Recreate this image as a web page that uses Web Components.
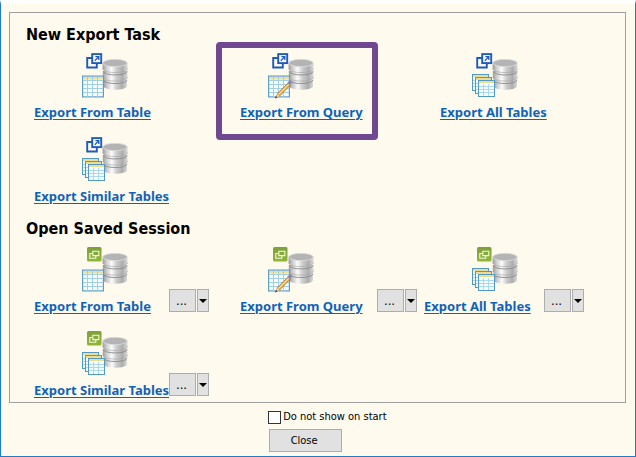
<!DOCTYPE html>
<html lang="en">
<head>
<meta charset="utf-8">
<title>Export</title>
<style>
  html, body {
    margin: 0;
  }
  body {
    font: 11px/16px Tahoma, "DejaVu Sans Condensed", "DejaVu Sans", sans-serif;
    color: #000;
  }
</style>
</head>
<body>
<export-dialog>
  <task-section heading="New Export Task">
    <export-task kind="table">Export From Table</export-task>
    <export-task kind="query" highlighted>Export From Query</export-task>
    <export-task kind="tables" indented>Export All Tables</export-task>
    <export-task kind="tables">Export Similar Tables</export-task>
  </task-section>
  <task-section heading="Open Saved Session">
    <export-task kind="table" saved>Export From Table</export-task>
    <export-task kind="query" saved>Export From Query</export-task>
    <export-task kind="tables" compact saved>Export All Tables</export-task>
    <export-task kind="tables" saved>Export Similar Tables</export-task>
  </task-section>
</export-dialog>

<script>
class ExportDialog extends HTMLElement {
  constructor() {
    super();
    this.attachShadow({ mode: 'open' });

    this.shadowRoot.innerHTML = /* html */ `
    <style>
        :host {
            display: flex;
            flex-direction: column;
            box-sizing: border-box;
            min-height: 100vh;
            padding: 8px 9px 4px 8px;
            border: 1px solid #1f7cc8;
            border-top: 4px solid #fff;
            background-color: #fffaee;
        }
        main {
            border: 1px solid #a0a0a0;
            padding: 12px 16px 3px;
        }
        footer {
            display: flex;
            flex-direction: column;
            align-items: flex-start;
            gap: 4px;
            padding: 6px 0 0 42%;
        }
        label {
            display: flex;
            align-items: center;
            gap: 2px;
            height: 16px;
        }
        input {
            appearance: none;
            box-sizing: border-box;
            width: 13px;
            height: 13px;
            margin: 0;
            border: 1px solid #333;
            background-color: #fff;
        }
        input:checked {
            box-shadow: inset 0 0 0 2px #fff;
            background-color: #333;
        }
        button {
            width: 73px;
            height: 23px;
            margin-left: 1px;
            padding: 0 3px 0 0;
            border: 1px solid #adadad;
            background-color: #e1e1e1;
            font: inherit;
            color: inherit;
        }
    </style>
    <main><slot></slot></main>
    <footer>
        <label><input type="checkbox">Do not show on start</label>
        <button type="button">Close</button>
    </footer>
        `;
  }
}

class TaskSection extends HTMLElement {
  constructor() {
    super();
    this.attachShadow({ mode: 'open' });

    this.shadowRoot.innerHTML = /* html */ `
    <style>
        :host {
            display: block;
        }
        :host(:not(:first-child)) {
            margin-top: 14px;
        }
        h2 {
            margin: 0 0 8px;
            font-size: 16px;
            line-height: 20px;
        }
        div {
            display: grid;
            grid-template-columns: 186px 204px 1fr;
            row-gap: 16px;
            padding-left: 8px;
        }
    </style>
    <h2></h2>
    <div><slot></slot></div>
        `;
  }

  static get observedAttributes() {
    return ['heading'];
  }

  attributeChangedCallback(name, oldValue, newValue) {
    this.shadowRoot.querySelector('h2').textContent = newValue;
  }
}

class ExportTask extends HTMLElement {
  constructor() {
    super();
    this.attachShadow({ mode: 'open' });

    this.shadowRoot.innerHTML = /* html */ `
    <style>
        :host {
            --indent: 0px;
            --link-width: 135px;
            position: relative;
            display: grid;
            grid-template-columns: var(--link-width) auto;
            grid-template-rows: 51px 17px;
            justify-content: start;
            padding-left: var(--indent);
        }
        :host([kind="query"]) {
            --indent: 20px;
            --link-width: 137px;
        }
        :host([indented]) {
            --indent: 16px;
        }
        :host([compact]) {
            --link-width: 120px;
        }
        :host([highlighted])::before {
            content: "";
            position: absolute;
            inset: -11px 46px -19px -4px;
            border: 6px solid #6f4890;
            border-radius: 4px;
            pointer-events: none;
        }
        task-icon {
            margin-left: calc(48px - var(--indent));
        }
        a {
            grid-row: 2;
            font-family: Tahoma, "Noto Sans", sans-serif;
            font-size: 13px;
            font-weight: bold;
            color: #0e63b8;
            white-space: nowrap;
            text-underline-offset: 2px;
            text-decoration-thickness: 1px;
        }
        split-button {
            grid-area: 1 / 2 / 3 / 3;
            align-self: end;
            margin-bottom: 3px;
        }
        :host(:not([saved])) split-button {
            display: none;
        }
    </style>
    <task-icon></task-icon>
    <a href="#"><slot></slot></a>
    <split-button></split-button>
        `;
  }

  connectedCallback() {
    const icon = this.shadowRoot.querySelector('task-icon');
    icon.setAttribute('kind', this.getAttribute('kind'));
    icon.toggleAttribute('saved', this.hasAttribute('saved'));
  }
}

class SplitButton extends HTMLElement {
  constructor() {
    super();
    this.attachShadow({ mode: 'open' });

    this.shadowRoot.innerHTML = /* html */ `
    <style>
        :host {
            display: flex;
            gap: 1px;
            height: 23px;
        }
        button {
            display: flex;
            align-items: center;
            justify-content: center;
            box-sizing: border-box;
            width: 27px;
            padding: 0 2px 0 0;
            border: 1px solid #adadad;
            background-color: #e1e1e1;
            font: inherit;
            font-size: 13px;
            color: #000;
        }
        .arrow {
            width: 12px;
            padding: 0;
        }
    </style>
    <button type="button">...</button>
    <button type="button" class="arrow" aria-label="Show sessions">
        <svg width="8" height="4" viewBox="0 0 8 4"><path d="M0 0h8L4 4z"/></svg>
    </button>
        `;
  }
}

const BADGES = {
  create: `
    <path d="M10 5H5.2v9.5h9.6V10" fill="none" stroke="#1c5bc0" stroke-width="1.9"/>
    <rect x="10.2" y="1.1" width="9" height="9" fill="#fffaee" stroke="#1c5bc0" stroke-width="1.9"/>
    <path d="M12.8 7.7l3.8-3.8M13.4 3.6h3.4v3.4" fill="none" stroke="#1c5bc0" stroke-width="1.3"/>`,
  saved: `
    <rect x="5" y="0" width="14.5" height="14.5" rx="1.5" fill="url(#green)"/>
    <path d="M10.5 6.5H7.8v4.8h6V9" fill="none" stroke="#f4f9dc" stroke-width="1.1"/>
    <path d="M10.8 4.2h6v4.4h-6z" fill="none" stroke="#f4f9dc" stroke-width="1.1"/>`
};

const DATABASE = `
    <path d="M21.5 26.6V33c0 5 23.5 5 23.5 0v-6.4z" fill="url(#disk)"/>
    <path d="M21.5 26.8c0 5 23.5 5 23.5 0" fill="none" stroke="#8a8a8a" stroke-width=".9"/>
    <path d="M20.8 18V24c0 5.4 24.7 5.4 24.7 0v-6z" fill="url(#disk)"/>
    <path d="M20.8 24c0 5.4 24.7 5.4 24.7 0" fill="none" stroke="#a2a2a2" stroke-width=".6"/>
    <path d="M21.5 18.2c0 5 23.5 5 23.5 0" fill="none" stroke="#8a8a8a" stroke-width=".9"/>
    <path d="M20.6 9.5V15.5c0 5.4 24.9 5.4 24.9 0v-6z" fill="url(#disk)"/>
    <path d="M20.6 15.5c0 5.4 24.9 5.4 24.9 0" fill="none" stroke="#a2a2a2" stroke-width=".6"/>
    <ellipse cx="33" cy="10" rx="12.2" ry="3.7" fill="#b4b4b4" stroke="#dedede" stroke-width=".8"/>`;

const SHEET = `
    <rect x=".6" y="23.1" width="20.8" height="20.8" fill="#f6fcff" stroke="#5d9fc4" stroke-width="1.2"/>
    <path d="M1.2 24h19.6v2.6H1.2z" fill="#ecdf9f"/>
    <path d="M1 27.5h20M1 31.5h20M1 35.5h20M1 39.5h20M5.5 24v20M10.5 24v20M15.5 24v20" stroke="#a3cfe3" stroke-width="1"/>`;

const PENCIL = `
    <path d="M7.5 45l2-4.5L20 30l2.2 2.2L12 42.8z" fill="#f2b44c" stroke="#8c6232" stroke-width=".6"/>
    <path d="M10.8 41.2L21 31" stroke="#ffdf8d" stroke-width="1"/>
    <path d="M19.4 29.8l2-2c1-.8 2.9 1 2.1 2.2L21.4 32z" fill="#8d83aa"/>
    <path d="M7.5 45l1.8-4 2.4 2.2z" fill="#e9cfa5"/>
    <path d="M7 45.4l1-2.4 1.4 1.4z" fill="#3b3b3b"/>`;

function smallSheet(x, y) {
  return `
    <g transform="translate(${x} ${y})">
        <rect x=".5" y=".5" width="16" height="16" fill="#f4fcff" stroke="#4f9bc4"/>
        <path d="M1 1h15v2H1z" fill="#efdc93"/>
        <path d="M1 6.5h15M1 9.5h15M1 12.5h15M5.5 4v12M10.5 4v12" stroke="#a6d5e8" stroke-width=".9"/>
    </g>`;
}

const DOCUMENTS = {
  table: SHEET,
  query: SHEET + PENCIL,
  tables: smallSheet(0, 21) + smallSheet(3, 24) + smallSheet(6, 27)
};

class TaskIcon extends HTMLElement {
  constructor() {
    super();
    this.attachShadow({ mode: 'open' });
  }

  static get observedAttributes() {
    return ['kind', 'saved'];
  }

  attributeChangedCallback() {
    const badge = this.hasAttribute('saved') ? BADGES.saved : BADGES.create;

    this.shadowRoot.innerHTML = /* html */ `
    <style>
        :host {
            display: block;
            width: 46px;
            height: 46px;
        }
        svg {
            display: block;
            overflow: visible;
        }
    </style>
    <svg width="46" height="46" viewBox="0 0 46 46" aria-hidden="true">
        <defs>
            <linearGradient id="disk">
                <stop offset="0" stop-color="#9c9c9c"/>
                <stop offset=".15" stop-color="#cbcbcb"/>
                <stop offset=".36" stop-color="#fcfcfc"/>
                <stop offset=".55" stop-color="#cdcdcd"/>
                <stop offset=".8" stop-color="#adadad"/>
                <stop offset="1" stop-color="#dadada"/>
            </linearGradient>
            <linearGradient id="green" x2="0" y2="1">
                <stop offset="0" stop-color="#7d9f3e"/>
                <stop offset="1" stop-color="#8fb832"/>
            </linearGradient>
        </defs>
        ${DATABASE}
        ${badge}
        ${DOCUMENTS[this.getAttribute('kind')] || ''}
    </svg>
        `;
  }
}

customElements.define('task-icon', TaskIcon);
customElements.define('split-button', SplitButton);
customElements.define('export-task', ExportTask);
customElements.define('task-section', TaskSection);
customElements.define('export-dialog', ExportDialog);
</script>
</body>
</html>
